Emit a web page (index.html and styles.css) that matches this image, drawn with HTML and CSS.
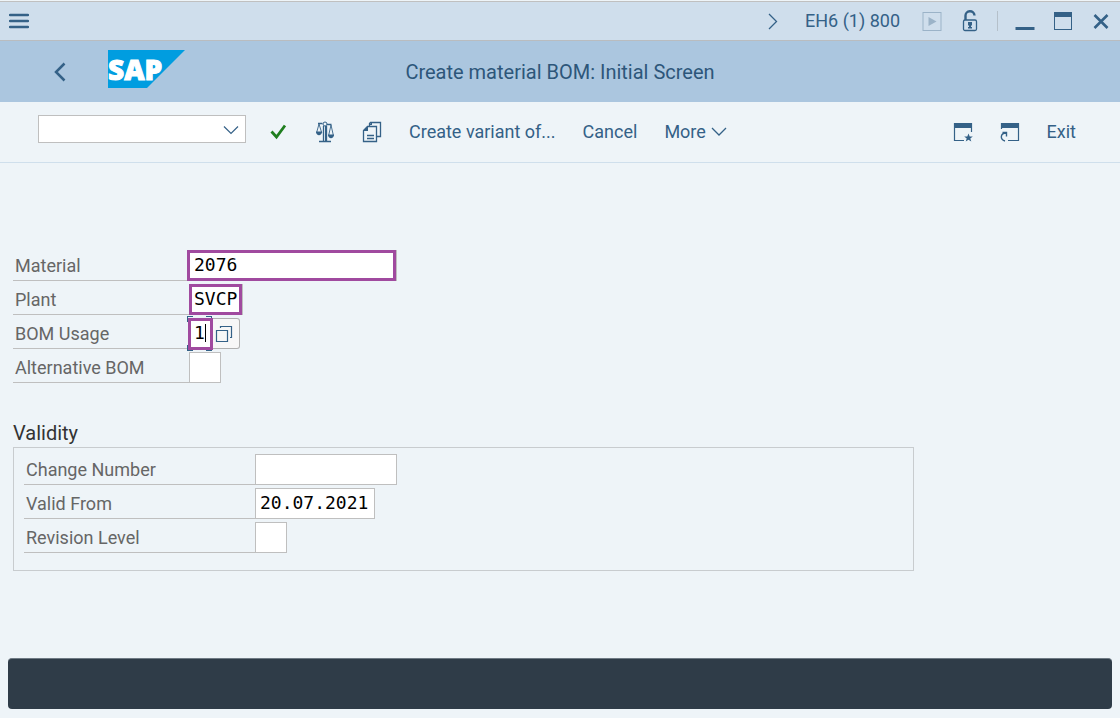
FILE: index.html
```html
<!DOCTYPE html>
<html lang="en">
<head>
  <meta charset="UTF-8" />
  <meta name="viewport" content="width=device-width, initial-scale=1.0" />
  <title>Create material BOM: Initial Screen</title>
  <link rel="stylesheet" href="styles.css">
</head>
<body>
  <header class="titlebar">
    <button class="menu-btn" aria-label="Menu">
      <svg width="20" height="16" viewBox="0 0 20 16"><path d="M1 2h18M1 8h18M1 14h18" stroke-width="2.4" stroke-linecap="round"/></svg>
    </button>
    <div class="window-tools">
      <button class="tool" aria-label="Expand">
        <svg width="20" height="20" viewBox="0 0 20 20"><path d="M6 3l7.500 7.500L6 18" stroke-width="1.300"/></svg>
      </button>
      <span class="system">EH6 (1) 800</span>
      <button class="tool" aria-label="Record" disabled>
        <svg width="20" height="20" viewBox="0 0 20 20"><rect x="1" y="1.500" width="18" height="18"/><path class="solid" d="M6.500 6v9l8-4.500z"/></svg>
      </button>
      <button class="tool" aria-label="Unlock">
        <svg width="20" height="22" viewBox="0 0 20 22"><rect x="3.500" y="10" width="13" height="10.500" rx="1.500" stroke-width="1.300"/><path d="M5.500 10V6a4.500 4.500 0 0 1 9-.500" stroke-width="2.400"/><path class="solid" d="M8 12h4v3.500h-1V17h1v1.500H8V17h1v-1.500H8z"/></svg>
      </button>
      <span class="divider"></span>
      <button class="tool" aria-label="Minimize">
        <svg width="20" height="20" viewBox="0 0 20 20"><path d="M.5 17.500h19" stroke-width="3"/></svg>
      </button>
      <button class="tool" aria-label="Maximize">
        <svg width="20" height="20" viewBox="0 0 20 20"><rect x="1.500" y="1.500" width="17" height="17"/><path class="solid" d="M1 1h18v5H1z"/></svg>
      </button>
      <button class="tool" aria-label="Close">
        <svg width="20" height="20" viewBox="0 0 20 20"><path d="M3.500 4l13 13M16.500 4l-13 13" stroke-width="2.600"/></svg>
      </button>
    </div>
  </header>

  <div class="shellbar">
    <div class="shell-left">
      <button class="back-btn" aria-label="Back">
        <svg width="12" height="20" viewBox="0 0 12 20"><path d="M10.500 1.500L2 10l8.500 8.500" stroke-width="2.500"/></svg>
      </button>
      <svg class="logo" width="77" height="38" viewBox="0 0 77 38" role="img" aria-label="SAP">
        <path class="logo-bg" d="M0 0h77L39 38H0z"/>
        <text class="logo-text" x="0" y="30">SAP</text>
      </svg>
    </div>
    <h1 class="title">Create material BOM: Initial Screen</h1>
  </div>

  <nav class="toolbar">
    <div class="command">
      <select class="command-select" aria-label="Command"><option></option></select>
      <svg class="command-arrow" width="16" height="10" viewBox="0 0 16 10"><path d="M1 1.500l7 7 7-7" stroke-width="1.200"/></svg>
    </div>
    <button class="action" aria-label="Enter">
      <svg class="check" width="20" height="20" viewBox="0 0 20 20"><path d="M3.500 9.500l5 5.500L17 3.500" stroke-width="2.800"/></svg>
    </button>
    <button class="action" aria-label="Compare">
      <svg width="20" height="22" viewBox="0 0 20 22"><path d="M3 2.500h4.500M12 3.500h4.500M4 20.500h12M8.500 5v15M11.500 5v15" stroke-width="1.300"/><circle cx="10" cy="3" r="2"/><path d="M4 3L1.500 12M4 3l2.800 9M16 4l-2.500 11M16 4l2.500 11" stroke-width=".9"/><path class="solid" d="M1 10.500h6c0 5-6 5-6 0zM13 13.500h6c0 5-6 5-6 0z"/><path class="solid" d="M10 5h2v15h-2z"/></svg>
    </button>
    <button class="action" aria-label="Copy from">
      <svg width="20" height="22" viewBox="0 0 20 22"><path d="M5.500 5.500h9v15h-13v-11z" stroke-width="1.300"/><path class="solid" d="M1 10l5-5v5z"/><path d="M7.500 5V2.500l1-1h10v14H15M5 14.500h7M5 17.500h7" stroke-width="1.300"/><path class="solid" d="M7 4l3-3v3z"/></svg>
    </button>
    <button class="action">Create variant of...</button>
    <button class="action">Cancel</button>
    <button class="action">More
      <svg width="16" height="10" viewBox="0 0 16 10"><path d="M1 1l7 7 7-7" stroke-width="1.300"/></svg>
    </button>
    <span class="spacer"></span>
    <button class="action" aria-label="New window">
      <svg width="20" height="20" viewBox="0 0 20 20"><path d="M18.500 10V1.500h-17v17H11" stroke-width="1.200"/><path class="solid" d="M1 1h18v5H1z"/><path class="solid" d="M15.500 11.500l1.200 3h3.100l-2.500 1.900 1 3.100-2.800-1.800-2.800 1.800 1-3.100-2.500-1.900h3.100z"/></svg>
    </button>
    <button class="action" aria-label="Create shortcut">
      <svg width="20" height="20" viewBox="0 0 20 20"><path d="M1.500 7V1.500h17v17H8" stroke-width="1.200"/><path class="solid" d="M1 1h18v5H1z"/><path d="M5 19c-5.500-1.500-4.500-8 1-8M2.500 10.500h4v4" stroke-width="1.400"/></svg>
    </button>
    <button class="action">Exit</button>
  </nav>

  <main class="content">
    <div class="fields">
      <div class="row">
        <label class="label" for="material">Material</label>
        <div class="field marked mark-start">
          <input class="input w-material" id="material" value="2076">
        </div>
      </div>
      <div class="row">
        <label class="label" for="plant">Plant</label>
        <div class="field marked">
          <input class="input w-plant" id="plant" value="SVCP">
        </div>
      </div>
      <div class="row">
        <label class="label" for="usage">BOM Usage</label>
        <div class="field marked focused">
          <input class="input w-usage" id="usage" value="1">
          <span class="caret"></span>
        </div>
        <button class="help-btn" aria-label="Value help">
          <svg width="18" height="18" viewBox="0 0 18 18"><path d="M1.500 5.500h11v11h-11zM5.500 3V1.500h11v11H15" stroke-width="1.200"/></svg>
        </button>
      </div>
      <div class="row">
        <label class="label" for="alternative">Alternative BOM</label>
        <div class="field">
          <input class="input w-short" id="alternative">
        </div>
      </div>
    </div>

    <h2 class="group-title">Validity</h2>
    <section class="group fields">
      <div class="row">
        <label class="label" for="change">Change Number</label>
        <div class="field">
          <input class="input w-change" id="change">
        </div>
      </div>
      <div class="row">
        <label class="label" for="valid-from">Valid From</label>
        <div class="field">
          <input class="input w-date" id="valid-from" value="20.07.2021">
        </div>
      </div>
      <div class="row">
        <label class="label" for="revision">Revision Level</label>
        <div class="field">
          <input class="input w-short" id="revision">
        </div>
      </div>
    </section>
  </main>

  <footer class="statusbar"></footer>
</body>
</html>
```
FILE: styles.css
```css
* {
  box-sizing: border-box;
}
body {
  margin: 0;
  min-height: 100vh;
  display: flex;
  flex-direction: column;
  background: #eef4f8;
  color: #346187;
  font-family: Roboto, sans-serif;
  font-size: 18px;
  line-height: 24px;
}
button {
  display: flex;
  align-items: center;
  justify-content: center;
  padding: 0;
  background: none;
  border: none;
  color: inherit;
  font: inherit;
  cursor: pointer;
}
svg {
  display: block;
  flex: none;
  fill: none;
  stroke: currentColor;
}
.solid {
  fill: currentColor;
  stroke: none;
}

/* window title bar */
.titlebar {
  display: flex;
  align-items: center;
  justify-content: space-between;
  height: 40px;
  margin-top: 1px;
  padding: 0 0 0 9px;
  background: #cfdeec;
  border-top: 1px solid #c0c0c0;
  border-bottom: 1px solid #b9bcbf;
}
.window-tools {
  display: flex;
  align-items: center;
}
.tool {
  width: 38px;
  height: 38px;
}
.tool:disabled {
  color: #9bb3c8;
}
.system {
  margin: 0 13px;
}
.divider {
  width: 1px;
  height: 20px;
  margin: 0 8px;
  background: #b5c0ca;
}

/* shell bar */
.shellbar {
  display: grid;
  grid-template-columns: 1fr auto 1fr;
  align-items: center;
  height: 61px;
  background: #abc6df;
}
.shell-left {
  display: flex;
  align-items: center;
  padding-left: 54px;
}
.logo {
  margin-left: 42px;
  margin-bottom: 6px;
  overflow: visible;
}
.logo-bg {
  fill: #009de0;
  stroke: none;
}
.logo-text {
  fill: #fff;
  stroke: #fff;
  font-family: "Open Sans", sans-serif;
  font-size: 28px;
  font-weight: 800;
}
.title {
  margin: 0;
  color: #2d567a;
  font-size: 20px;
  font-weight: 400;
}

/* toolbar */
.toolbar {
  display: flex;
  align-items: center;
  gap: 1px;
  height: 61px;
  padding: 0 31px 0 38px;
  border-bottom: 1px solid #cfdfec;
}
.command {
  position: relative;
  width: 208px;
  margin-right: 8px;
  margin-bottom: 6px;
}
.command-select {
  display: block;
  width: 100%;
  height: 28px;
  appearance: none;
  background: #fff;
  border: 1px solid #bfbfbf;
  border-radius: 0;
}
.command-arrow {
  position: absolute;
  right: 7px;
  top: 10px;
  pointer-events: none;
}
.action {
  gap: 5px;
  height: 40px;
  padding: 0 13px;
}
.check {
  color: #1f7e1f;
}
.spacer {
  flex: 1;
}

/* form */
.content {
  flex: 1;
  padding: 87px 13px 0;
}
.fields {
  display: flex;
  flex-direction: column;
  gap: 3px;
}
.row {
  display: flex;
  height: 31px;
}
.label {
  width: 176px;
  padding: 4px 2px 0;
  border-bottom: 1px solid #bfbfbf;
  color: #666;
}
.field {
  position: relative;
}
.input {
  display: block;
  height: 31px;
  padding: 0 4px 2px;
  background: #fff;
  border: 1px solid #bfbfbf;
  border-radius: 0;
  color: #000;
  font-family: "DejaVu Sans Mono", monospace;
  font-size: 18px;
}
.w-material { width: 208px; }
.w-plant { width: 54px; }
.w-usage { width: 24px; }
.w-short { width: 32px; }
.w-change { width: 142px; }
.w-date { width: 120px; }

.marked::after {
  content: "";
  position: absolute;
  inset: 0 1px 0 0;
  border: 3px solid #a04a9f;
  pointer-events: none;
}
.mark-start::after {
  left: -2px;
}
/* focus frame, only its four corners show */
.focused::before {
  content: "";
  position: absolute;
  inset: -2px 1px -2px -2px;
  border: 1px solid #346187;
  mask-image:
    linear-gradient(90deg, #000 6px, transparent 6px calc(100% - 6px), #000 calc(100% - 6px)),
    linear-gradient(#000 6px, transparent 6px calc(100% - 6px), #000 calc(100% - 6px));
  mask-composite: intersect;
}
.focused::after {
  inset: 0 0 -1px -1px;
}
.caret {
  position: absolute;
  left: 16px;
  top: 6px;
  width: 1px;
  height: 18px;
  background: #000;
}
.help-btn {
  width: 27px;
  padding-right: 4px;
  background: #f7f7f7;
  border: 1px solid #b0b0b0;
  border-left: none;
  border-radius: 0 3px 3px 0;
}

.group-title {
  margin: 38px 0 2px;
  color: #333;
  font-size: 20px;
  font-weight: 400;
}
.group {
  max-width: 901px;
  padding: 6px 10px 17px;
  border: 1px solid #c8cccf;
}
.group .label {
  width: 231px;
}

.statusbar {
  height: 51px;
  margin: 0 8px 9px;
  background: #2f3c48;
  border-top: 1px solid #6f7a84;
  border-radius: 4px;
}
```
